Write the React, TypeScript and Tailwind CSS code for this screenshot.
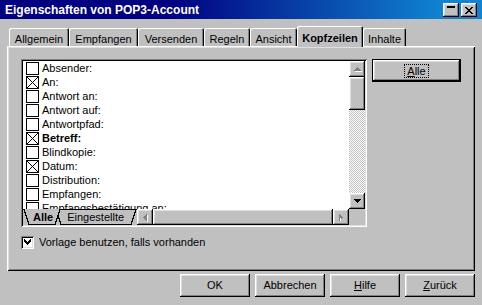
import React from 'react';

const raised =
  'shadow-[inset_-1px_-1px_0_#000000,inset_1px_1px_0_#ffffff,inset_-2px_-2px_0_#808080,inset_2px_2px_0_#dfdfdf]';
const sunken =
  'shadow-[inset_1px_1px_0_#808080,inset_-1px_-1px_0_#ffffff,inset_2px_2px_0_#000000,inset_-2px_-2px_0_#dfdfdf]';

const HEADERS: [string, boolean, boolean?][] = [
  ['Absender:', false],
  ['An:', true],
  ['Antwort an:', false],
  ['Antwort auf:', false],
  ['Antwortpfad:', false],
  ['Betreff:', true, true],
  ['Blindkopie:', false],
  ['Datum:', true],
  ['Distribution:', false],
  ['Empfangen:', false],
  ['Empfangsbestätigung an:', false],
];

const TABS = [
  { label: 'Allgemein', w: 'w-[60px]' },
  { label: 'Empfangen', w: 'w-[69px]' },
  { label: 'Versenden', w: 'w-[66px]' },
  { label: 'Regeln', w: 'w-[46px]' },
  { label: 'Ansicht', w: 'w-[47px]' },
  { label: 'Kopfzeilen', w: 'w-[66px]', active: true },
  { label: 'Inhalte', w: 'w-[43px]' },
];

// little pixel triangle for scrollbar buttons
const Arrow = ({ dir, disabled }: { dir: 'up' | 'down' | 'left' | 'right'; disabled?: boolean }) => {
  const rows = [0, 1, 2, 3];
  const fill = disabled ? '#808080' : '#000000';
  const vertical = dir === 'up' || dir === 'down';
  return (
    <svg width={vertical ? 7 : 4} height={vertical ? 4 : 7} shapeRendering="crispEdges" className="overflow-visible">
      {rows.map((i) => {
        const len = 1 + i * 2;
        const off = 3 - i;
        if (dir === 'up') return <rect key={i} x={off} y={i} width={len} height={1} fill={fill} />;
        if (dir === 'down') return <rect key={i} x={i} y={i} width={7 - i * 2} height={1} fill={fill} />;
        if (dir === 'left') return <rect key={i} x={i} y={off} width={1} height={len} fill={fill} />;
        return <rect key={i} x={i} y={i} width={1} height={7 - i * 2} fill={fill} />;
      })}
      {disabled && dir === 'up' && <rect x={1} y={4} width={7} height={1} fill="#ffffff" />}
      {disabled && dir === 'right' && <rect x={1} y={4} width={1} height={3} fill="#ffffff" />}
      {disabled && dir === 'left' && <rect x={4} y={1} width={1} height={7} fill="#ffffff" />}
    </svg>
  );
};

const ScrollBtn = ({ dir, disabled }: { dir: 'up' | 'down' | 'left' | 'right'; disabled?: boolean }) => (
  <div className={`w-[16px] h-[16px] shrink-0 flex items-center justify-center bg-[#c0c0c0] ${raised}`}>
    <Arrow dir={dir} disabled={disabled} />
  </div>
);

const CrossBox = ({ checked }: { checked: boolean }) => (
  <svg width="13" height="13" shapeRendering="crispEdges" className="shrink-0">
    <rect x="0.5" y="0.5" width="12" height="12" fill="#ffffff" stroke="#000000" />
    {checked && (
      <g stroke="#000000" strokeWidth="1">
        <line x1="1" y1="1" x2="12" y2="12" />
        <line x1="12" y1="1" x2="1" y2="12" />
      </g>
    )}
  </svg>
);

const Button = ({ children, className = '' }: { children: React.ReactNode; className?: string }) => (
  <div className={`h-[23px] flex items-center justify-center bg-[#c0c0c0] text-black ${raised} ${className}`}>
    {children}
  </div>
);

const App: React.FC = () => {
  return (
    <div className="w-[482px] h-[305px] bg-[#c0c0c0] font-['Liberation_Sans',Arial,sans-serif] text-[11px] text-black flex flex-col overflow-hidden">
      {/* title bar */}
      <div className="h-[19px] shrink-0 flex items-center justify-between pl-[5px] pr-[5px] bg-[linear-gradient(to_right,#000080_35%,#1084d0_92%)]">
        <span className="text-white font-bold text-[12px] leading-none">Eigenschaften von POP3-Account</span>
        <div className="flex gap-[2px] mt-[1px]">
          <div className={`w-[16px] h-[14px] bg-[#c0c0c0] flex justify-center pt-[3px] ${raised}`}>
            <div className="w-[8px] h-[2px] bg-black" />
          </div>
          <div className={`w-[16px] h-[14px] bg-[#c0c0c0] flex items-center justify-center ${raised}`}>
            <svg width="8" height="7" shapeRendering="crispEdges">
              <path d="M0 0h2v1h-2zM6 0h2v1h-2zM1 1h2v1h-2zM5 1h2v1h-2zM2 2h4v1h-4zM3 3h2v1h-2zM2 4h4v1h-4zM1 5h2v1h-2zM5 5h2v1h-2zM0 6h2v1h-2zM6 6h2v1h-2z" fill="#000" />
            </svg>
          </div>
        </div>
      </div>

      {/* tab headers */}
      <div className="relative z-10 h-[21px] mt-[7px] -mb-[1px] pl-[9px] flex items-end">
        {TABS.map((t) =>
          t.active ? (
            <div
              key={t.label}
              className={`${t.w} h-[21px] bg-[#c0c0c0] rounded-t-[2px] font-bold flex items-start justify-center pt-[4px] shadow-[inset_1px_1px_0_#ffffff,inset_-1px_0_0_#000000,inset_-2px_0_0_#808080]`}
            >
              {t.label}
            </div>
          ) : (
            <div
              key={t.label}
              className={`${t.w} h-[18px] mb-[1px] bg-[#c0c0c0] rounded-t-[2px] flex items-start justify-center pt-[3px] shadow-[inset_1px_1px_0_#ffffff,inset_-1px_0_0_#000000,inset_-2px_0_0_#808080]`}
            >
              {t.label}
            </div>
          )
        )}
      </div>

      {/* tab page */}
      <div className="ml-[7px] w-[468px] h-[225px] shrink-0 pt-[13px] pl-[14px] shadow-[inset_1px_1px_0_#ffffff,inset_-1px_-1px_0_#000000,inset_2px_2px_0_#dfdfdf,inset_-2px_-2px_0_#808080]">
        <div className="flex gap-[5px]">
          {/* header list */}
          <div className={`w-[346px] h-[168px] p-[2px] bg-[#c0c0c0] flex flex-col ${sunken}`}>
            <div className="h-[148px] flex">
              <div className="flex-1 bg-white overflow-hidden pl-[3px]">
                {HEADERS.map(([label, checked, bold]) => (
                  <div key={label} className="h-[14px] flex items-center gap-[3px] leading-none">
                    <CrossBox checked={checked} />
                    <span className={bold ? 'font-bold' : ''}>{label}</span>
                  </div>
                ))}
              </div>
              <div className="w-[16px] flex flex-col">
                <ScrollBtn dir="up" disabled />
                <div className={`h-[33px] bg-[#c0c0c0] ${raised}`} />
                <div className="flex-1 bg-[image:repeating-conic-gradient(#c0c0c0_0_25%,#ffffff_0_50%)] bg-[length:2px_2px]" />
                <ScrollBtn dir="down" />
              </div>
            </div>
            <div className="h-[16px] flex">
              {/* sheet tabs */}
              <div className="relative w-[114px] h-[16px] shrink-0 bg-[#c0c0c0]">
                <svg width="114" height="16" className="absolute inset-0" shapeRendering="crispEdges">
                  <line x1="0" y1="0.5" x2="114" y2="0.5" stroke="#000" />
                  <polygon points="33,0.5 38,15.5 108,15.5 113,0.5" fill="#c0c0c0" stroke="#000" />
                  <polygon points="1,0.5 6,15.5 32,15.5 37,0.5" fill="#c0c0c0" stroke="#000" />
                  <line x1="2" y1="0.5" x2="36" y2="0.5" stroke="#c0c0c0" />
                </svg>
                <div className="relative flex h-[16px] items-center leading-none">
                  <span className="ml-[10px] font-bold">Alle</span>
                  <span className="ml-[14px]">Eingestellte</span>
                </div>
              </div>
              <ScrollBtn dir="left" disabled />
              <div className={`flex-1 bg-[#c0c0c0] ${raised}`} />
              <ScrollBtn dir="right" disabled />
              <div className="w-[16px] bg-[#c0c0c0]" />
            </div>
          </div>

          {/* default button */}
          <div className="w-[89px] h-[23px] border border-black">
            <div className={`h-full flex items-center justify-center ${raised}`}>
              <span className="outline-1 outline-dotted outline-black px-[2px] leading-[12px]">
                <span className="underline">A</span>lle
              </span>
            </div>
          </div>
        </div>

        <div className="mt-[9px] flex items-center gap-[5px] h-[13px]">
          <div className={`w-[13px] h-[13px] bg-white flex items-center justify-center ${sunken}`}>
            <svg width="7" height="7" shapeRendering="crispEdges">
              <path d="M6 0h1v3h-1zM5 1h1v3h-1zM4 2h1v3h-1zM3 3h1v3h-1zM2 2h1v3h-1zM1 1h1v3h-1zM0 0h1v3h-1z" fill="#000" />
            </svg>
          </div>
          <span>Vorlage benutzen, falls vorhanden</span>
        </div>
      </div>

      {/* dialog buttons */}
      <div className="mt-[3px] flex justify-end gap-[5px] pr-[7px]">
        <Button className="w-[70px]">OK</Button>
        <Button className="w-[70px]">Abbrechen</Button>
        <Button className="w-[70px]">
          <span>
            <span className="underline">H</span>ilfe
          </span>
        </Button>
        <Button className="w-[70px]">
          <span>
            <span className="underline">Z</span>urück
          </span>
        </Button>
      </div>
    </div>
  );
};

export default App;
